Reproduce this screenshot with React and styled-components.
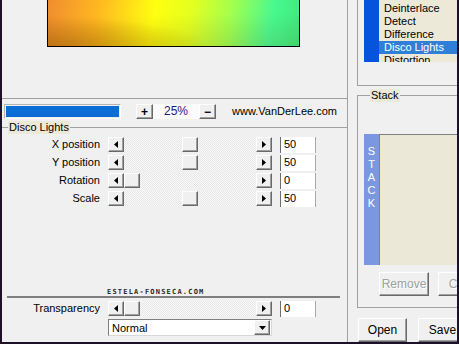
import { Fragment } from "react";
import styled, { createGlobalStyle } from "styled-components";

const GlobalStyle = createGlobalStyle`
  html, body { margin: 0; padding: 0; }
  body {
    background: #f0f0f0;
    font-family: "Liberation Sans", Arial, sans-serif;
    font-size: 11px;
    color: #000;
  }
`;

const Window = styled.div`
  width: 459px;
  height: 344px;
  box-sizing: border-box;
  border-left: 2px solid #1d1029;
  border-right: 2px solid #1d1029;
  border-bottom: 2px solid #1d1029;
  display: flex;
  overflow: hidden;
  background: #f0f0f0;
`;

const LeftColumn = styled.div`
  width: 345px;
  flex: none;
  display: flex;
  flex-direction: column;
  border-right: 1px solid #a0a0a0;
`;

const PreviewPane = styled.div`
  height: 99px;
  box-sizing: border-box;
  border-bottom: 1px solid #a0a0a0;
  padding-left: 45px;
`;

const PreviewImage = styled.div`
  width: 253px;
  height: 47px;
  box-sizing: border-box;
  border: 1px solid #000;
  border-top: none;
  background:
    radial-gradient(ellipse at 0% 100%, rgba(150, 90, 0, 0.45), rgba(150, 90, 0, 0) 45%),
    linear-gradient(to bottom, rgba(0, 0, 0, 0) 30%, rgba(90, 55, 0, 0.12) 100%),
    linear-gradient(100deg, #f08c30 0%, #ffb820 20%, #ffff10 42%, #e4ff20 56%, #a0ff50 72%, #48f890 88%, #40e878 100%);
`;

const ZoomBar = styled.div`
  height: 22px;
  box-sizing: border-box;
  padding: 5px 0 0 2px;
  display: flex;
  align-items: flex-start;
`;

const Progress = styled.div`
  width: 117px;
  height: 15px;
  box-sizing: border-box;
  border: 1px solid;
  border-color: #b4b4b4 #fff #fff #b4b4b4;
  padding: 1px;
  &::before {
    content: "";
    display: block;
    height: 100%;
    background: #0a6ed6;
  }
`;

const SmallButton = styled.div`
  width: 17px;
  height: 15px;
  box-sizing: border-box;
  border: 1px solid;
  border-color: #fff #696969 #696969 #fff;
  box-shadow: inset -1px -1px 0 #a0a0a0;
  background: #f0f0f0;
  display: flex;
  align-items: center;
  justify-content: center;
  font-weight: bold;
  font-size: 12px;
  line-height: 1;
  margin-left: ${(p) => p.$gap || 0}px;
`;

const Percent = styled.div`
  width: 46px;
  height: 15px;
  background: #fbfbfb;
  color: #1a1a7a;
  font-size: 12px;
  line-height: 15px;
  text-align: center;
`;

const SiteLink = styled.div`
  margin-left: 16px;
  line-height: 14px;
`;

const Group = styled.fieldset`
  margin: 0;
  padding: 0;
  min-width: 0;
  border: none;
  border-top: 1px solid #a0a0a0;
  display: flex;
  flex-direction: column;
`;

const DiscoGroup = styled(Group)`
  flex: 1;
`;

const Legend = styled.legend`
  margin-left: 6px;
  padding: 0 1px;
  background: #ece9d8;
  line-height: 13px;
  font-size: 11px;
`;

const ParamGrid = styled.div`
  display: grid;
  grid-template-columns: 98px 164px 36px;
  column-gap: 8px;
  row-gap: 2px;
  grid-auto-rows: 16px;
  padding-top: ${(p) => p.$top || 0}px;
  align-items: start;
`;

const ParamLabel = styled.div`
  text-align: right;
  line-height: 15px;
  white-space: nowrap;
`;

const SliderFrame = styled.div`
  height: 15px;
  display: flex;
`;

const ArrowButton = styled.div`
  width: 16px;
  height: 15px;
  flex: none;
  box-sizing: border-box;
  border: 1px solid;
  border-color: #fff #696969 #696969 #fff;
  box-shadow: inset -1px -1px 0 #a0a0a0;
  background: #f0f0f0;
  display: flex;
  align-items: center;
  justify-content: center;
`;

const Track = styled.div`
  flex: 1;
  position: relative;
  background-color: #f2f2f2;
  background-image: repeating-conic-gradient(#e6e6e6 0 25%, #fafafa 0 50%);
  background-size: 2px 2px;
`;

const Thumb = styled(ArrowButton)`
  position: absolute;
  top: 0;
`;

const EditBox = styled.div`
  width: 36px;
  height: 16px;
  box-sizing: border-box;
  background: #fff;
  border-left: 1px solid #6d6d6d;
  border-right: 1px solid #a8a8a8;
  padding-left: 3px;
  line-height: 15px;
  font-size: 11px;
`;

const BottomBlock = styled.div`
  margin-top: auto;
  padding-bottom: 7px;
`;

const Watermark = styled.div`
  padding-left: 105px;
  font-family: "DejaVu Sans Mono", monospace;
  font-weight: bold;
  font-size: 7px;
  letter-spacing: 1.2px;
  line-height: 8px;
  color: #2a2a2a;
`;

const Separator = styled.div`
  margin: 0 7px 3px 5px;
  border-top: 2px solid #7f7f7f;
`;

const Dropdown = styled.div`
  grid-column: 2;
  height: 17px;
  box-sizing: border-box;
  background: #fff;
  border-left: 1px solid #808080;
  border-top: 1px solid #808080;
  border-right: 1px solid #d8d8d8;
  border-bottom: 1px solid #d8d8d8;
  display: flex;
  align-items: center;
  justify-content: space-between;
  padding-left: 3px;
  padding-right: 1px;
`;

const RightColumn = styled.div`
  flex: 1;
  min-width: 0;
  padding-left: 9px;
  display: flex;
  flex-direction: column;
`;

const ListGroup = styled.div`
  height: 86px;
  box-sizing: border-box;
  border-left: 1px solid #a0a0a0;
  border-bottom: 1px solid #a0a0a0;
  padding-left: 6px;
`;

const ListBox = styled.div`
  height: 62px;
  display: flex;
  overflow: hidden;
`;

const Strip = styled.div`
  width: 15px;
  flex: none;
  background: ${(p) => p.$color};
  color: #fff;
  display: flex;
  flex-direction: column;
  align-items: center;
  padding-top: 11px;
  box-sizing: border-box;
  font-size: 11px;
  line-height: 13px;
`;

const Items = styled.div`
  flex: 1;
  background: #ece9d8;
  padding-top: 2px;
`;

const Item = styled.div`
  line-height: 13px;
  padding-left: 5px;
  white-space: nowrap;
  background: ${(p) => (p.$selected ? "#2f7fd8" : "transparent")};
  color: ${(p) => (p.$selected ? "#fff" : "#000")};
`;

const StackGroup = styled(Group)`
  margin-top: 3px;
  height: 219px;
  box-sizing: border-box;
  border-left: 1px solid #a0a0a0;
  border-bottom: 1px solid #a0a0a0;
  padding: 32px 0 0 6px;
`;

const StackArea = styled.div`
  height: 131px;
  display: flex;
`;

const StackList = styled.div`
  flex: 1;
  background: #ebe8d8;
  border-top: 1px solid #808080;
  border-left: 1px solid #808080;
`;

const ButtonRow = styled.div`
  display: flex;
  gap: ${(p) => p.$gap}px;
  margin-top: ${(p) => p.$top}px;
  padding-left: ${(p) => p.$left}px;
`;

const Button = styled.div`
  width: ${(p) => p.$width}px;
  height: 24px;
  flex: none;
  box-sizing: border-box;
  border: 1px solid;
  border-color: #fff #696969 #696969 #fff;
  box-shadow: inset -1px -1px 0 #a0a0a0;
  background: #f0f0f0;
  display: flex;
  align-items: center;
  justify-content: center;
  font-size: 12px;
  color: ${(p) => (p.$disabled ? "#a0a0a0" : "#000")};
  text-shadow: ${(p) => (p.$disabled ? "1px 1px 0 #fff" : "none")};
`;

const Triangle = ({ dir }) => {
  const points = {
    left: "4,0 4,7 0,3.5",
    right: "0,0 0,7 4,3.5",
    down: "0,0 7,0 3.5,4",
  }[dir];
  const w = dir === "down" ? 7 : 4;
  const h = dir === "down" ? 4 : 7;
  return (
    <svg width={w} height={h} viewBox={`0 0 ${w} ${h}`}>
      <polygon points={points} fill="#000" />
    </svg>
  );
};

const Slider = ({ value }) => (
  <SliderFrame>
    <ArrowButton>
      <Triangle dir="left" />
    </ArrowButton>
    <Track>
      <Thumb style={{ left: `calc((100% - 16px) * ${value / 100})` }} />
    </Track>
    <ArrowButton>
      <Triangle dir="right" />
    </ArrowButton>
  </SliderFrame>
);

const params = [
  { label: "X position", value: 50 },
  { label: "Y position", value: 50 },
  { label: "Rotation", value: 0 },
  { label: "Scale", value: 50 },
];

const filters = ["Deinterlace", "Detect", "Difference", "Disco Lights", "Distortion"];

const App = () => (
  <>
    <GlobalStyle />
    <Window>
      <LeftColumn>
        <PreviewPane>
          <PreviewImage />
        </PreviewPane>
        <ZoomBar>
          <Progress />
          <SmallButton $gap={15}>+</SmallButton>
          <Percent>25%</Percent>
          <SmallButton>−</SmallButton>
          <SiteLink>www.VanDerLee.com</SiteLink>
        </ZoomBar>
        <DiscoGroup>
          <Legend>Disco Lights</Legend>
          <ParamGrid $top={3}>
            {params.map((p) => (
              <Fragment key={p.label}>
                <ParamLabel>{p.label}</ParamLabel>
                <Slider value={p.value} />
                <EditBox>{p.value}</EditBox>
              </Fragment>
            ))}
          </ParamGrid>
          <BottomBlock>
            <Watermark>ESTELA-FONSECA.COM</Watermark>
            <Separator />
            <ParamGrid>
              <ParamLabel>Transparency</ParamLabel>
              <Slider value={0} />
              <EditBox>0</EditBox>
              <Dropdown>
                Normal
                <ArrowButton>
                  <Triangle dir="down" />
                </ArrowButton>
              </Dropdown>
            </ParamGrid>
          </BottomBlock>
        </DiscoGroup>
      </LeftColumn>
      <RightColumn>
        <ListGroup>
          <ListBox>
            <Strip $color="#0653de" />
            <Items>
              {filters.map((f) => (
                <Item key={f} $selected={f === "Disco Lights"}>
                  {f}
                </Item>
              ))}
            </Items>
          </ListBox>
        </ListGroup>
        <StackGroup>
          <Legend>Stack</Legend>
          <StackArea>
            <Strip $color="#7b97df">
              {"STACK".split("").map((c) => (
                <span key={c}>{c}</span>
              ))}
            </Strip>
            <StackList />
          </StackArea>
          <ButtonRow $gap={9} $top={7} $left={15}>
            <Button $width={50} $disabled>Remove</Button>
            <Button $width={50} $disabled>Clear</Button>
          </ButtonRow>
        </StackGroup>
        <ButtonRow $gap={11} $top={10} $left={1}>
          <Button $width={49}>Open</Button>
          <Button $width={49}>Save</Button>
        </ButtonRow>
      </RightColumn>
    </Window>
  </>
);

export default App;
